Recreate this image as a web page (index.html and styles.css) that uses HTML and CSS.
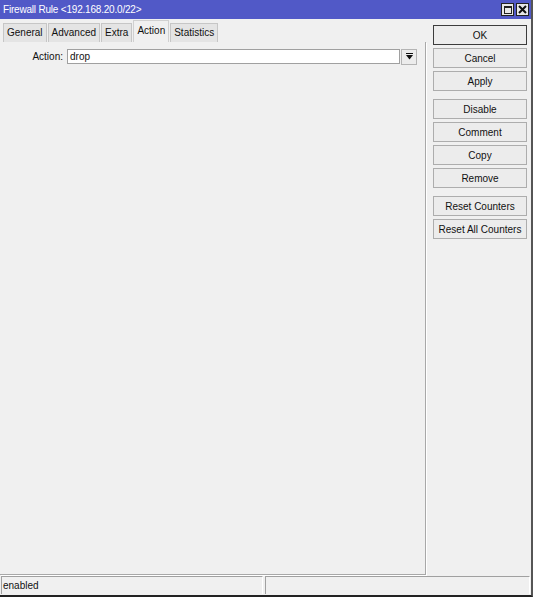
FILE: index.html
```html
<!DOCTYPE html>
<html lang="en">
<head>
  <meta charset="UTF-8" />
  <title>Firewall Rule</title>
  <link rel="stylesheet" href="styles.css">
</head>
<body>
  <div class="window">
    <div class="titlebar">
      <span class="title">Firewall Rule &lt;192.168.20.0/22&gt;</span>
      <div class="wbtns">
        <span class="wbtn"><span class="max-box"></span></span>
        <span class="wbtn">
          <svg width="9" height="9" viewBox="0 0 9 9"><path d="M1 1 L8 8 M8 1 L1 8" stroke="#111" stroke-width="2"/></svg>
        </span>
      </div>
    </div>

    <div class="main">
      <div class="left">
        <div class="tabs">
          <span class="tab">General</span>
          <span class="tab">Advanced</span>
          <span class="tab">Extra</span>
          <span class="tab active">Action</span>
          <span class="tab">Statistics</span>
        </div>
        <div class="panel">
          <div class="row">
            <span class="label">Action:</span>
            <div class="field">drop</div>
            <span class="drop">
              <svg width="7" height="7" viewBox="0 0 7 7"><path d="M0 0.5 H7" stroke="#111" stroke-width="1"/><path d="M0 2 H7 L3.5 6.5 Z" fill="#111"/></svg>
            </span>
          </div>
        </div>
      </div>

      <div class="actions">
        <div class="group">
          <button class="btn default">OK</button>
          <button class="btn">Cancel</button>
          <button class="btn">Apply</button>
        </div>
        <div class="group">
          <button class="btn">Disable</button>
          <button class="btn">Comment</button>
          <button class="btn">Copy</button>
          <button class="btn">Remove</button>
        </div>
        <div class="group">
          <button class="btn">Reset Counters</button>
          <button class="btn">Reset All Counters</button>
        </div>
      </div>
    </div>

    <div class="status">
      <div class="cell first">enabled</div>
      <div class="cell"></div>
    </div>
  </div>
  <div class="desktop"></div>
</body>
</html>
```

FILE: styles.css
```css
body {
  margin: 0;
  padding: 0;
  background-color: #fff;
  font-family: 'Liberation Sans', Arial, sans-serif;
  font-size: 10px;
  color: #111;
}
.window {
  width: 531px;
  height: 595px;
  background-color: #f0f0f0;
  border-right: 2px solid #555;
  border-bottom: 2px solid #222;
  display: flex;
  flex-direction: column;
  overflow: hidden;
}
.titlebar {
  height: 19px;
  background-color: #5159c7;
  display: flex;
  align-items: center;
  justify-content: space-between;
  padding: 0 2px 0 3px;
  flex-shrink: 0;
}
.title {
  color: #fff;
  font-size: 10px;
  letter-spacing: -0.2px;
}
.wbtns {
  display: flex;
  gap: 2px;
}
.wbtn {
  width: 11px;
  height: 11px;
  background-color: #e8e8e8;
  border: 1px solid #222;
  display: flex;
  align-items: center;
  justify-content: center;
}
.max-box {
  width: 6px;
  height: 5px;
  border: 1px solid #222;
  border-top-width: 2px;
}

.main {
  flex: 1;
  display: flex;
  min-height: 0;
}
.left {
  width: 426px;
  display: flex;
  flex-direction: column;
  padding-top: 2px;
}
.tabs {
  display: flex;
  align-items: flex-end;
  height: 21px;
  padding-left: 3px;
}
.tab {
  height: 18px;
  line-height: 18px;
  padding: 0 3px;
  background-color: #e4e4e4;
  border: 1px solid #c6c6c6;
  border-bottom: none;
  margin-right: 1px;
}
.tab.active {
  height: 21px;
  line-height: 20px;
  background-color: #f0f0f0;
  border-color: #d0d0d0;
}
.panel {
  flex: 1;
  border-right: 1px solid #a8a8a8;
  border-bottom: 1px solid #a8a8a8;
  box-shadow: 1px 1px 0 #fff;
  margin-bottom: 1px;
}
.row {
  display: flex;
  align-items: center;
  margin-top: 7px;
  height: 15px;
}
.label {
  width: 63px;
  text-align: right;
  padding-right: 4px;
}
.field {
  width: 329px;
  height: 13px;
  line-height: 13px;
  background-color: #fff;
  border: 1px solid #a0a0a0;
  padding-left: 2px;
}
.drop {
  width: 14px;
  height: 14px;
  margin-left: 1px;
  border: 1px solid #b4b4b4;
  background-color: #ececec;
  display: flex;
  align-items: center;
  justify-content: center;
}

.actions {
  flex: 1;
  padding: 6px 0 0 7px;
  display: flex;
  flex-direction: column;
  gap: 8px;
}
.group {
  display: flex;
  flex-direction: column;
  gap: 3px;
}
.btn {
  width: 94px;
  height: 20px;
  font-family: 'Liberation Sans', Arial, sans-serif;
  font-size: 10px;
  color: #111;
  background-color: #ececec;
  border: 1px solid #adadad;
  padding: 0;
}
.btn.default {
  border-color: #3c3c3c;
}

.status {
  height: 18px;
  display: flex;
  gap: 2px;
  padding: 0 1px 1px 1px;
  flex-shrink: 0;
}
.cell {
  flex: 1;
  border-top: 1px solid #a0a0a0;
  border-left: 1px solid #a0a0a0;
  border-right: 1px solid #fff;
  line-height: 17px;
  padding-left: 1px;
}
.cell.first {
  width: 259px;
  flex: none;
}
.desktop {
  height: 3px;
  background-color: #fff;
}
```
